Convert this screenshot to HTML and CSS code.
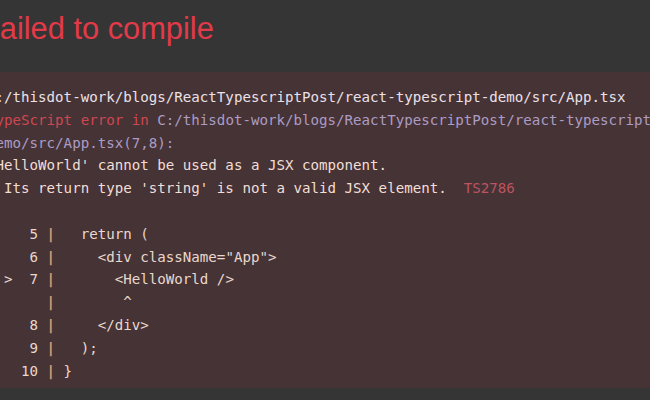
FILE: index.html
```html
<!DOCTYPE html>
<html lang="en">
<head>
<meta charset="utf-8">
<title>Failed to compile</title>
<link rel="stylesheet" href="styles.css">
</head>
<body>
<div class="overlay">
  <h1 class="title">Failed to compile</h1>
  <div class="panel">
<pre class="log"><span class="path">C:/thisdot-work/blogs/ReactTypescriptPost/react-typescript-demo/src/App.tsx</span>
<span class="err">TypeScript error in </span><span class="loc">C:/thisdot-work/blogs/ReactTypescriptPost/react-typescript-</span>
<span class="loc">demo/src/App.tsx(7,8):</span>
<span class="msg">'HelloWorld' cannot be used as a JSX component.</span>
<span class="msg">  Its return type 'string' is not a valid JSX element.</span>  <span class="code-id">TS2786</span>

<span class="num">     5 </span><span class="bar">|</span><span class="code">   return (</span>
<span class="num">     6 </span><span class="bar">|</span><span class="code">     &lt;div className="App"&gt;</span>
<span class="num">  &gt;  7 </span><span class="bar">|</span><span class="code">       &lt;HelloWorld /&gt;</span>
<span class="num">       </span><span class="bar">|</span><span class="code">        ^</span>
<span class="num">     8 </span><span class="bar">|</span><span class="code">     &lt;/div&gt;</span>
<span class="num">     9 </span><span class="bar">|</span><span class="code">   );</span>
<span class="num">    10 </span><span class="bar">|</span><span class="code"> }</span></pre>
  </div>
</div>
</body>
</html>
```

FILE: styles.css
```css
html, body {
  margin: 0;
  padding: 0;
  width: 650px;
  height: 400px;
  overflow: hidden;
  background: #353535;
}

.overlay {
  display: flex;
  flex-direction: column;
  height: 400px;
  overflow: hidden;
}

.title {
  margin: 12px 0 0 -19px;
  font-family: "Liberation Sans", Arial, sans-serif;
  font-weight: normal;
  font-size: 30.8px;
  line-height: 34px;
  color: #e23a49;
  white-space: nowrap;
}

.panel {
  margin-top: 26px;
  background: #463335;
  padding: 14px 0 6px 0;
  overflow: hidden;
}

.log {
  margin: 0 0 0 -13px;
  font-family: "DejaVu Sans Mono", "Liberation Mono", monospace;
  font-size: 14.15px;
  line-height: 22.8px;
  white-space: pre;
  color: #ecdcd4;
}

.path { color: #ebe1e8; }
.err { color: #cf4752; }
.loc { color: #ac9cc4; }
.msg { color: #f2ded6; }
.code-id { color: #bd5461; }
.num { color: #ead8cc; }
.bar { color: #dc9a74; font-weight: bold; }
.code { color: #ead8cd; }
```
